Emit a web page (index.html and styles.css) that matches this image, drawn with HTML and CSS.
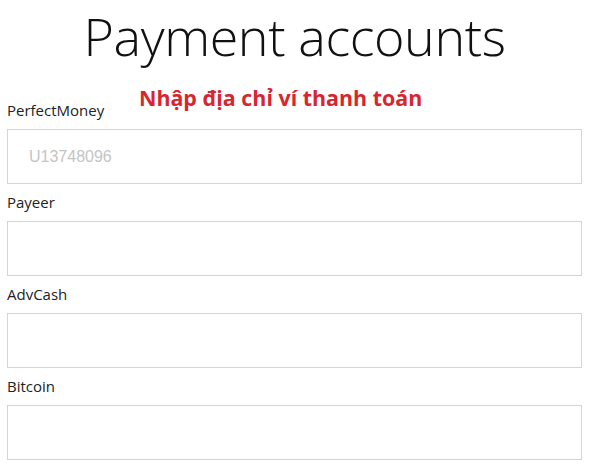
FILE: index.html
```html
<!DOCTYPE html>
<html lang="vi">
<head>
  <meta charset="UTF-8">
  <title>Payment accounts</title>
  <link rel="stylesheet" href="styles.css">
</head>
<body>
  <main class="accounts">
    <h1>Payment accounts</h1>

    <div class="field first">
      <span class="note">Nhập địa chỉ ví thanh toán</span>
      <label for="pm">PerfectMoney</label>
      <input type="text" id="pm" placeholder="U13748096">
    </div>

    <div class="field">
      <label for="payeer">Payeer</label>
      <input type="text" id="payeer">
    </div>

    <div class="field">
      <label for="adv">AdvCash</label>
      <input type="text" id="adv">
    </div>

    <div class="field">
      <label for="btc">Bitcoin</label>
      <input type="text" id="btc">
    </div>
  </main>
</body>
</html>
```

FILE: styles.css
```css
body {
  font-family: "Open Sans", "Noto Sans", sans-serif;
  background-color: #fff;
  color: #222;
  margin: 0;
  padding: 0;
}
.accounts {
  width: 575px;
  padding-left: 7px;
}
h1 {
  margin: 0 0 29px;
  font-size: 52px;
  font-weight: 300;
  letter-spacing: -0.4px;
  line-height: 71px;
  text-align: center;
  color: #111;
}
.field {
  display: flex;
  flex-direction: column;
}
.field.first {
  position: relative;
}
.field label {
  font-size: 15px;
  line-height: 21px;
  margin-bottom: 8px;
}
.field input {
  box-sizing: border-box;
  height: 55px;
  width: 100%;
  margin: 0 0 8px;
  padding: 0 0 0 21px;
  border: 1px solid #d4d4d4;
  font-family: "Liberation Sans", Arial, sans-serif;
  font-size: 16px;
  outline: none;
}
.field input::placeholder {
  color: #c4c4c4;
}
.note {
  position: absolute;
  top: -13px;
  left: 132px;
  font-size: 21.4px;
  font-weight: bold;
  line-height: 22px;
  color: #d7262e;
  white-space: nowrap;
}
```
